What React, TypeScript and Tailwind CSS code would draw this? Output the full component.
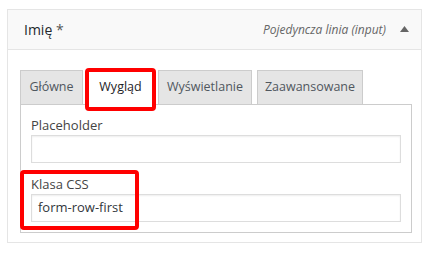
import React from 'react'

// Field editor card with tabs, plus the red annotation boxes drawn over it

const FONT = { fontFamily: '"Open Sans", "Noto Sans", sans-serif' }

interface TabProps {
  label: string
  width: string
  active?: boolean
}

function Tab({ label, width, active }: TabProps) {
  return (
    <div
      className={
        'h-[35px] -mb-px flex items-center justify-center border border-[#cccccc] text-[12.5px] font-medium ' +
        width +
        (active
          ? ' bg-white border-b-white text-[#1d2327] relative z-10'
          : ' bg-[#e5e5e5] text-[#50575e]')
      }
    >
      {label}
    </div>
  )
}

function Field({ label, value }: { label: string; value?: string }) {
  return (
    <div>
      <label className="block h-[19px] leading-[19px] text-[13px] text-[#444444]">{label}</label>
      <div className="h-[28px] border border-[#dddddd] bg-white shadow-[inset_0_1px_2px_rgba(0,0,0,0.07)] flex items-center px-[6px] text-[13px] text-[#32373c]">
        {value}
      </div>
    </div>
  )
}

export default function App() {
  return (
    <div className="relative w-[430px] h-[253px] bg-white pt-[9px] pl-[7px]" style={FONT}>
      <div className="w-[415px] h-[234px] border border-[#e5e5e5]">
        {/* Header */}
        <div className="h-[40px] bg-[#f9f9f9] border-b border-[#e5e5e5] flex items-center justify-between pl-[16px] pr-[12px]">
          <span className="text-[14px] text-[#23282d]">
            Imię <span className="text-[#555555]">*</span>
          </span>
          <div className="flex items-center gap-[14px]">
            <span className="text-[12px] italic text-[#666666]">Pojedyncza linia (input)</span>
            <svg width="9" height="6" viewBox="0 0 9 6" className="mt-[-1px]">
              <polygon points="4.5,0 9,6 0,6" fill="#666666" />
            </svg>
          </div>
        </div>

        {/* Body */}
        <div className="pt-[20px] pl-[12px] pr-[9px]">
          <div className="flex gap-[5px]">
            <Tab label="Główne" width="w-[63px]" />
            <Tab label="Wygląd" width="w-[65px]" active />
            <Tab label="Wyświetlanie" width="w-[94px]" />
            <Tab label="Zaawansowane" width="w-[106px]" />
          </div>
          <div className="h-[129px] border border-[#cccccc] px-[10px] pt-[11px] flex flex-col gap-[12px]">
            <Field label="Placeholder" />
            <Field label="Klasa CSS" value="form-row-first" />
          </div>
        </div>
      </div>

      {/* Annotations */}
      <div className="absolute left-[85px] top-[68px] w-[71px] h-[43px] border-[4px] border-[#ff0000] rounded-[4px] z-20" />
      <div className="absolute left-[20px] top-[170px] w-[119px] h-[60px] border-[4px] border-[#ff0000] rounded-[4px] z-20" />
    </div>
  )
}
